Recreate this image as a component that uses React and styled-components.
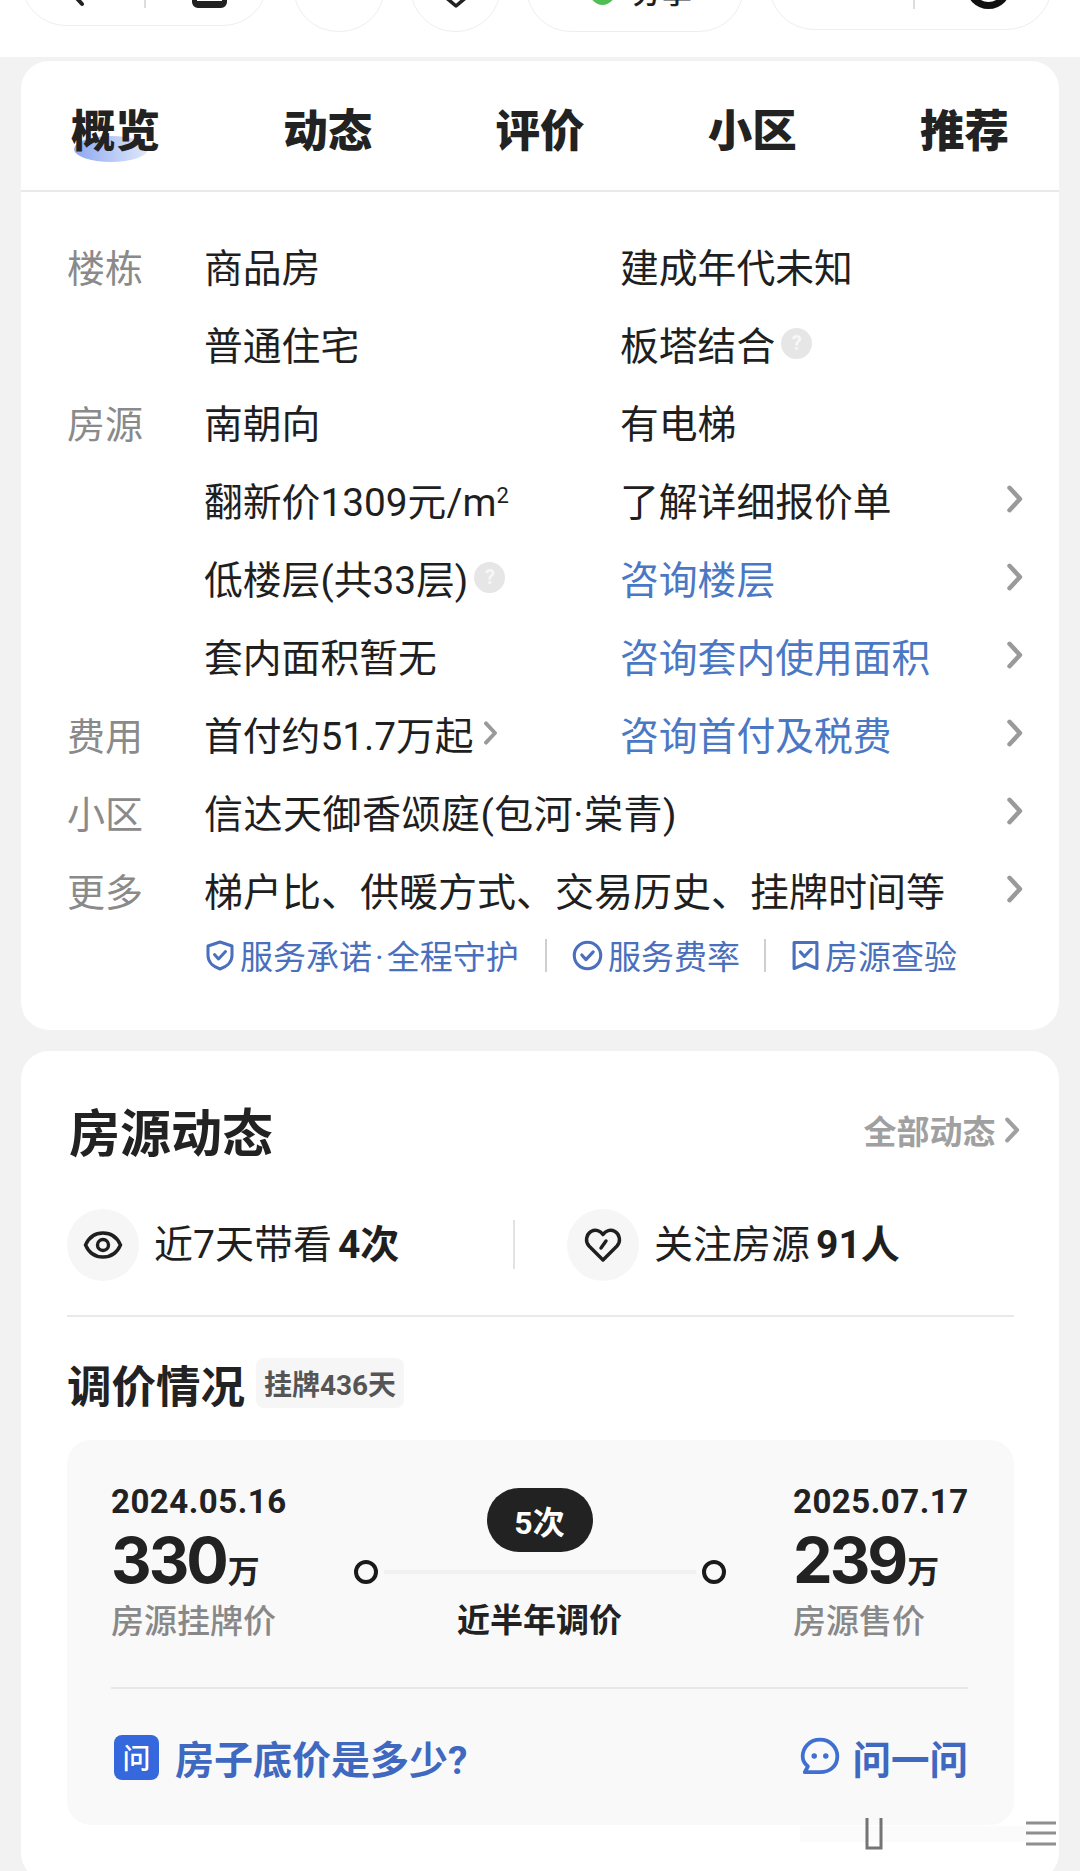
import React from "react";
import styled, { createGlobalStyle } from "styled-components";

const GlobalStyle = createGlobalStyle`
    html, body {
        margin: 0;
        padding: 0;
        background: #f2f2f2;
    }
    body {
        width: 1080px;
        height: 1871px;
        overflow: hidden;
        font-family: "Noto Sans CJK SC", sans-serif;
        color: #1f1f1f;
    }
    * {
        box-sizing: border-box;
    }
    svg {
        flex: none;
    }
`;

function Chevron({ size = 28, color = "#9a9a9a" }) {
    return (
        <svg width={size * 0.6} height={size} viewBox="0 0 12 20" fill="none">
            <path d="M2.5 2 L10 10 L2.5 18" stroke={color} strokeWidth="3.2" strokeLinecap="round" strokeLinejoin="round" />
        </svg>
    );
}

function ShieldIcon() {
    return (
        <svg width="30" height="33" viewBox="0 0 30 32" fill="none" stroke="#4a6fbd" strokeWidth="3" strokeLinecap="round" strokeLinejoin="round">
            <path d="M15 2.5 L27 6.5 V16 C27 23 21 27.5 15 29.5 C9 27.5 3 23 3 16 V6.5 Z" />
            <path d="M9.5 15 L13.5 19.5 L20.5 12" />
        </svg>
    );
}

function CheckCircleIcon() {
    return (
        <svg width="31" height="31" viewBox="0 0 30 30" fill="none" stroke="#4a6fbd" strokeWidth="3" strokeLinecap="round" strokeLinejoin="round">
            <circle cx="15" cy="15" r="12.8" />
            <path d="M9.5 14.5 L13.5 19 L20.5 11.5" />
        </svg>
    );
}

function BookmarkIcon() {
    return (
        <svg width="29" height="33" viewBox="0 0 28 31" fill="none" stroke="#4a6fbd" strokeWidth="3" strokeLinecap="round" strokeLinejoin="round">
            <path d="M3 3 H25 V28 L14 23.5 L3 28 Z" />
            <path d="M9 12 L13 16.5 L19.5 9.5" />
        </svg>
    );
}

function EyeIcon() {
    return (
        <svg width="40" height="30" viewBox="0 0 40 30" fill="none" stroke="#1f1f1f" strokeWidth="3.4">
            <path d="M2.5 15 C6 7 12.5 3 20 3 C27.5 3 34 7 37.5 15 C34 23 27.5 27 20 27 C12.5 27 6 23 2.5 15 Z" />
            <circle cx="20" cy="15" r="5.5" />
        </svg>
    );
}

function HeartIcon() {
    return (
        <svg width="38" height="36" viewBox="0 0 38 36" fill="none" stroke="#1f1f1f" strokeWidth="3.4" strokeLinecap="round" strokeLinejoin="round">
            <path d="M19 33 L5 19 C1 14.5 2 7.5 7 4.5 C11.5 2 16.5 3.5 19 7.5 C21.5 3.5 26.5 2 31 4.5 C36 7.5 37 14.5 33 19 Z" />
            <path d="M17 21 L22 14" />
        </svg>
    );
}

function ChatIcon() {
    return (
        <svg width="42" height="42" viewBox="0 0 40 40" fill="none">
            <path d="M20 3.5 C29.5 3.5 36.5 10.5 36.5 19.5 C36.5 28.5 29.5 34.5 20 34.5 H5.5 L8.5 29 C5 26 3.5 23 3.5 19.5 C3.5 10.5 10.5 3.5 20 3.5 Z" stroke="#3f6fd0" strokeWidth="3.6" strokeLinejoin="round" />
            <circle cx="14.5" cy="19" r="2.6" fill="#3f6fd0" />
            <circle cx="25.5" cy="19" r="2.6" fill="#3f6fd0" />
        </svg>
    );
}

function Watermark() {
    return (
        <WatermarkBox>
            <svg width="260" height="36" viewBox="0 0 260 36" fill="none">
                <rect x="0" y="10" width="230" height="16" fill="#efefef" opacity="0.22" />
                <path d="M67 2 V32 H81 V2" stroke="#3a3a3a" strokeWidth="3" opacity="0.7" />
                <path d="M226 7 H256 M226 17 H256 M226 28 H256" stroke="#444" strokeWidth="3" opacity="0.6" />
            </svg>
        </WatermarkBox>
    );
}

const tabs = ["概览", "动态", "评价", "小区", "推荐"];

const rows = [
    { label: "楼栋", left: "商品房", right: "建成年代未知" },
    { left: "普通住宅", right: "板塔结合", rightHint: true },
    { label: "房源", left: "南朝向", right: "有电梯" },
    { left: "翻新价1309元/m", leftSup: "2", right: "了解详细报价单", arrow: true },
    { left: "低楼层(共33层)", leftHint: true, right: "咨询楼层", link: true, arrow: true },
    { left: "套内面积暂无", right: "咨询套内使用面积", link: true, arrow: true },
    { label: "费用", left: "首付约51.7万起", leftArrow: true, right: "咨询首付及税费", link: true, arrow: true },
    { label: "小区", wide: "信达天御香颂庭(包河·棠青)", tracking: 0.5, arrow: true },
    { label: "更多", wide: "梯户比、供暖方式、交易历史、挂牌时间等", arrow: true },
];

export default function App() {
    return (
        <Page>
            <GlobalStyle />
            <TopBar>
                <Pill $width={247} $lift={31} $pad={17}>
                    <PillIcon $left={44}>
                        <svg width="24" height="20" viewBox="0 0 24 20" fill="none">
                            <path d="M14 0 L7 6 L16 16" stroke="#222" strokeWidth="4" strokeLinecap="round" />
                        </svg>
                    </PillIcon>
                    <PillRule $left={54} />
                    <PillSquare />
                </Pill>
                <Pill $width={92} $lift={25} />
                <Pill $width={91} $lift={25} $pad={22}>
                    <PillIcon $left={29}>
                        <svg width="32" height="14" viewBox="0 0 32 14" fill="none">
                            <path d="M3 0 L16 11 L29 0" stroke="#222" strokeWidth="3.6" strokeLinejoin="round" />
                        </svg>
                    </PillIcon>
                </Pill>
                <Pill $width={218} $lift={25} $pad={26}>
                    <GreenDot />
                    <PillText>分享</PillText>
                </Pill>
                <Pill $width={283} $lift={27} $pad={20}>
                    <PillRule $left={143} />
                    <PillRing />
                </Pill>
            </TopBar>

            <OverviewCard>
                <TabBar>
                    {tabs.map((tab, i) => (
                        <Tab key={tab} $active={i === 0}>{tab}</Tab>
                    ))}
                </TabBar>
                <Rows>
                    {rows.map((row, i) => (
                        <Row key={i}>
                            <Label>{row.label}</Label>
                            {row.wide ? (
                                <WideValue $tracking={row.tracking}>{row.wide}</WideValue>
                            ) : (
                                <>
                                    <Value>
                                        {row.left}
                                        {row.leftSup && <Sup>{row.leftSup}</Sup>}
                                        {row.leftHint && <Hint>?</Hint>}
                                        {row.leftArrow && <InlineArrow><Chevron size={24} /></InlineArrow>}
                                    </Value>
                                    <Value $link={row.link}>
                                        {row.right}
                                        {row.rightHint && <Hint>?</Hint>}
                                    </Value>
                                </>
                            )}
                            <ArrowCell>{row.arrow && <Chevron />}</ArrowCell>
                        </Row>
                    ))}
                </Rows>
                <ServiceRow>
                    <ServiceItem $width={314}>
                        <ShieldIcon />
                        <span>服务承诺<ServiceDot>·</ServiceDot>全程守护</span>
                    </ServiceItem>
                    <ServiceRule />
                    <ServiceItem $width={166}><CheckCircleIcon />服务费率</ServiceItem>
                    <ServiceRule />
                    <ServiceItem><BookmarkIcon />房源查验</ServiceItem>
                </ServiceRow>
            </OverviewCard>

            <ActivityCard>
                <CardHead>
                    <CardTitle>房源动态</CardTitle>
                    <AllLink>全部动态<Chevron size={26} color="#a0a0a0" /></AllLink>
                </CardHead>
                <Stats>
                    <Stat $width={446}>
                        <StatIcon><EyeIcon /></StatIcon>
                        <StatText>近7天带看<b>4次</b></StatText>
                    </Stat>
                    <StatRule />
                    <Stat>
                        <StatIcon><HeartIcon /></StatIcon>
                        <StatText>关注房源<b>91人</b></StatText>
                    </Stat>
                </Stats>
                <PriceHead>
                    <PriceTitle>调价情况</PriceTitle>
                    <PriceTag>挂牌436天</PriceTag>
                </PriceHead>
                <PricePanel>
                    <Timeline>
                        <PriceColumn>
                            <DateText>2024.05.16</DateText>
                            <Amount>330<small>万</small></Amount>
                            <AmountNote>房源挂牌价</AmountNote>
                        </PriceColumn>
                        <Track>
                            <CountBadge>5次</CountBadge>
                            <TrackLine>
                                <Dot />
                                <Rail />
                                <Dot />
                            </TrackLine>
                            <TrackNote>近半年调价</TrackNote>
                        </Track>
                        <PriceColumn $width={175}>
                            <DateText>2025.07.17</DateText>
                            <Amount>239<small>万</small></Amount>
                            <AmountNote>房源售价</AmountNote>
                        </PriceColumn>
                    </Timeline>
                    <AskRow>
                        <AskQuestion>
                            <AskBadge>问</AskBadge>
                            房子底价是多少?
                        </AskQuestion>
                        <AskAction><ChatIcon />问一问</AskAction>
                    </AskRow>
                </PricePanel>
            </ActivityCard>
            <Watermark />
        </Page>
    );
}

const Page = styled.div`
    position: relative;
    width: 1080px;
    height: 1871px;
    overflow: hidden;
    background: #f2f2f2;
`;

const TopBar = styled.div`
    height: 57px;
    background: #fff;
    overflow: hidden;
    display: flex;
    align-items: flex-end;
    padding-left: 21px;
    gap: 25px;
`;

const Pill = styled.div`
    flex: none;
    width: ${(p) => p.$width}px;
    height: 90px;
    margin-bottom: ${(p) => p.$lift}px;
    padding-bottom: ${(p) => p.$pad || 0}px;
    border: 1.5px solid #eeeeee;
    border-radius: 45px;
    display: flex;
    align-items: flex-end;
`;

const PillIcon = styled.span`
    display: flex;
    margin-left: ${(p) => p.$left}px;
`;

const PillRule = styled.i`
    display: block;
    width: 1.5px;
    height: 14px;
    background: #ddd;
    margin-left: ${(p) => p.$left}px;
`;

const PillSquare = styled.i`
    display: block;
    width: 35px;
    height: 50px;
    margin-left: 46px;
    border: 5px solid #222;
    border-bottom-width: 7px;
    border-radius: 6px;
`;

const PillRing = styled.i`
    display: block;
    width: 45px;
    height: 45px;
    margin-left: 51px;
    border: 7px solid #111;
    border-radius: 50%;
`;

const GreenDot = styled.i`
    display: block;
    width: 25px;
    height: 25px;
    margin-left: 63px;
    border-radius: 50%;
    background: #4fbf53;
`;

const PillText = styled.span`
    margin-left: 17px;
    font-size: 30px;
    line-height: 30px;
    font-weight: 500;
`;

const Card = styled.section`
    margin: 4px 21px 0;
    background: #fff;
    border-radius: 28px;
`;

const OverviewCard = styled(Card)`
    height: 969px;
`;

const TabBar = styled.div`
    height: 131px;
    padding: 4px 50px 0 50px;
    display: flex;
    align-items: center;
    justify-content: space-between;
    border-bottom: 2px solid #e9e9e9;
`;

const Tab = styled.div`
    position: relative;
    font-size: 44.5px;
    line-height: 60px;
    font-weight: 900;
    color: #222;
    z-index: 0;

    &::after {
        content: "";
        display: ${(p) => (p.$active ? "block" : "none")};
        position: absolute;
        z-index: -1;
        left: 3px;
        bottom: -4px;
        width: 74px;
        height: 26px;
        border-radius: 50%;
        background: linear-gradient(90deg, #8ea8ef, #dfe8fb);
    }
`;

const Rows = styled.div`
    padding: 34px 36px 0 46px;
`;

const Row = styled.div`
    height: 78px;
    display: grid;
    grid-template-columns: 137px 416px 1fr 16px;
    align-items: center;
`;

const Label = styled.div`
    font-size: 38px;
    color: #8a8a8a;
`;

const Value = styled.div`
    display: flex;
    align-items: center;
    font-size: 38.8px;
    white-space: nowrap;
    color: ${(p) => (p.$link ? "#4a78c4" : "#1f1f1f")};
    font-family: Roboto, "Noto Sans CJK SC", sans-serif;
`;

const WideValue = styled(Value)`
    grid-column: 2 / span 2;
    font-size: 39px;
    letter-spacing: ${(p) => p.$tracking || 0}px;
`;

const Sup = styled.span`
    font-size: 22px;
    line-height: 22px;
    align-self: flex-start;
    margin-top: 14px;
`;

const Hint = styled.span`
    width: 31px;
    height: 31px;
    margin-left: 6px;
    border-radius: 50%;
    background: #e6e6e6;
    color: #f7f7f7;
    font-size: 20px;
    font-weight: 700;
    display: flex;
    align-items: center;
    justify-content: center;
`;

const InlineArrow = styled.span`
    display: flex;
    margin-left: 9px;
`;

const ArrowCell = styled.div`
    display: flex;
    align-items: center;
    justify-content: flex-end;
`;

const ServiceRow = styled.div`
    display: flex;
    align-items: center;
    height: 40px;
    margin-top: 7px;
    padding-left: 184px;
`;

const ServiceItem = styled.div`
    display: flex;
    flex: none;
    align-items: center;
    gap: 5px;
    width: ${(p) => (p.$width ? `${p.$width}px` : "auto")};
    font-size: 33px;
    font-family: Roboto, "Noto Sans CJK SC", sans-serif;
    color: #4a6fbd;
    white-space: nowrap;
`;

const ServiceDot = styled.span`
    margin: 0 3px;
`;

const ServiceRule = styled.i`
    display: block;
    flex: none;
    width: 2px;
    height: 33px;
    background: #cfcfcf;
    margin: 0 25px 0 26px;
`;

const ActivityCard = styled(Card)`
    margin-top: 21px;
    height: 830px;
    padding: 0 45px 0 46px;
`;

const CardHead = styled.div`
    height: 158px;
    padding: 0 0 0 2px;
    display: flex;
    align-items: center;
    justify-content: space-between;
`;

const CardTitle = styled.h2`
    margin: 0;
    font-size: 51px;
    font-weight: 700;
    color: #222;
`;

const AllLink = styled.div`
    display: flex;
    align-items: center;
    gap: 9px;
    margin-right: -6px;
    font-size: 33px;
    font-weight: 700;
    color: #a0a0a0;
`;

const Stats = styled.div`
    height: 108px;
    display: flex;
    align-items: flex-start;
    border-bottom: 2px solid #e9e9e9;
`;

const Stat = styled.div`
    display: flex;
    flex: none;
    align-items: center;
    gap: 15px;
    width: ${(p) => (p.$width ? `${p.$width}px` : "auto")};
`;

const StatIcon = styled.div`
    width: 72px;
    height: 72px;
    border-radius: 50%;
    background: #f6f6f6;
    display: flex;
    align-items: center;
    justify-content: center;
`;

const StatText = styled.div`
    font-size: 39px;
    line-height: 72px;
    font-family: Roboto, "Noto Sans CJK SC", sans-serif;
    white-space: nowrap;

    b {
        font-weight: 700;
        margin-left: 6px;
    }
`;

const StatRule = styled.i`
    display: block;
    flex: none;
    width: 2px;
    height: 49px;
    margin: 11px 52px 0 0;
    background: #e2e2e2;
`;

const PriceHead = styled.div`
    height: 123px;
    padding-top: 9px;
    display: flex;
    align-items: center;
    gap: 11px;
`;

const PriceTitle = styled.h3`
    margin: 0;
    font-size: 44.5px;
    font-weight: 700;
    color: #222;
`;

const PriceTag = styled.span`
    height: 50px;
    width: 148px;
    border-radius: 8px;
    background: #f6f6f6;
    color: #555;
    font-size: 28px;
    font-weight: 700;
    display: flex;
    align-items: center;
    justify-content: center;
    font-family: Roboto, "Noto Sans CJK SC", sans-serif;
`;

const PricePanel = styled.div`
    height: 385px;
    border-radius: 24px;
    background: #f9f9f9;
    padding: 42px 46px 0 44px;
`;

const Timeline = styled.div`
    height: 207px;
    display: flex;
    justify-content: space-between;
    border-bottom: 2px solid #e9e9e9;
`;

const PriceColumn = styled.div`
    width: ${(p) => p.$width || 178}px;
    display: flex;
    flex-direction: column;
    align-items: flex-start;
    white-space: nowrap;
`;

const DateText = styled.div`
    font-family: Roboto, sans-serif;
    font-size: 33px;
    line-height: 40px;
    font-weight: 700;
    letter-spacing: 0.5px;
    color: #222;
`;

const Amount = styled.div`
    font-family: Inter, sans-serif;
    font-size: 63px;
    line-height: 76px;
    font-weight: 700;
    letter-spacing: -3px;
    color: #222;

    small {
        font-family: "Noto Sans CJK SC", sans-serif;
        font-size: 32px;
        letter-spacing: 0;
        margin-left: 2px;
    }
`;

const AmountNote = styled.div`
    margin-top: -11px;
    font-size: 33px;
    line-height: 46px;
    font-weight: 500;
    color: #888;
`;

const Track = styled.div`
    flex: none;
    width: 366px;
    margin-right: 3px;
    display: flex;
    flex-direction: column;
    align-items: center;
`;

const CountBadge = styled.div`
    width: 106px;
    height: 64px;
    margin-top: 6px;
    border-radius: 32px;
    background: #222;
    color: #fff;
    font-size: 32px;
    font-weight: 700;
    display: flex;
    align-items: center;
    justify-content: center;
    font-family: Roboto, "Noto Sans CJK SC", sans-serif;
`;

const TrackLine = styled.div`
    width: 372px;
    margin-top: 8px;
    display: flex;
    align-items: center;
`;

const Dot = styled.i`
    display: block;
    flex: none;
    width: 24px;
    height: 24px;
    border: 4px solid #1a1a1a;
    border-radius: 50%;
`;

const Rail = styled.i`
    display: block;
    flex: 1;
    height: 4px;
    background: #f1f1f1;
    margin: 0 6px;
`;

const TrackNote = styled.div`
    margin-top: 12px;
    font-size: 33px;
    line-height: 44px;
    font-weight: 700;
    color: #222;
`;

const AskRow = styled.div`
    height: 136px;
    display: flex;
    align-items: center;
    justify-content: space-between;
`;

const AskQuestion = styled.div`
    display: flex;
    align-items: center;
    gap: 16px;
    padding-left: 3px;
    font-size: 39px;
    font-weight: 700;
    color: #3f68c0;
    font-family: Roboto, "Noto Sans CJK SC", sans-serif;
`;

const AskBadge = styled.span`
    width: 45px;
    height: 45px;
    border-radius: 8px;
    background: #3468dc;
    color: #fff;
    font-size: 28px;
    font-weight: 500;
    display: flex;
    align-items: center;
    justify-content: center;
`;

const AskAction = styled.div`
    display: flex;
    align-items: center;
    gap: 11px;
    font-size: 38.5px;
    font-weight: 700;
    color: #3f68c0;
`;

const WatermarkBox = styled.div`
    position: absolute;
    left: 800px;
    top: 1816px;
    pointer-events: none;
`;
